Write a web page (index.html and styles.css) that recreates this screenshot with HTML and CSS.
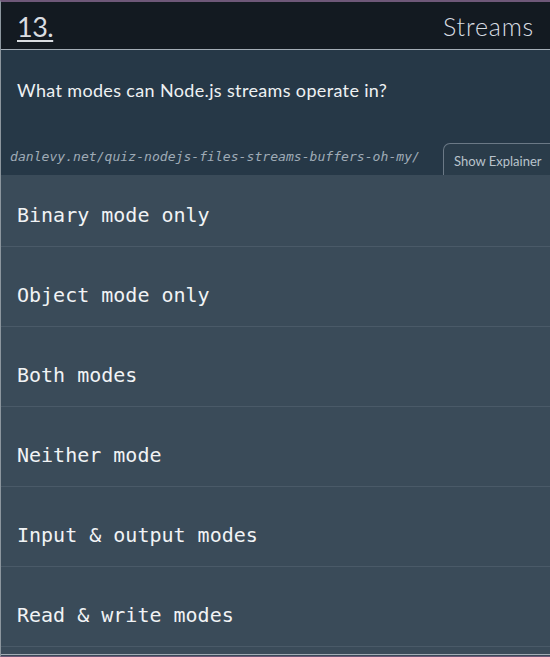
FILE: index.html
```html
<!DOCTYPE html>
<html>
<head>
<meta charset="utf-8">
<link rel="stylesheet" href="styles.css">
</head>
<body>
<div class="quiz">
  <header class="quiz-header">
    <span class="quiz-num">13.</span>
    <span class="quiz-title">Streams</span>
  </header>
  <section class="question">
    <p class="question-text">What modes can Node.js streams operate in?</p>
    <div class="question-meta">
      <span class="source">danlevy.net/quiz-nodejs-files-streams-buffers-oh-my/</span>
      <button class="explainer-btn">Show Explainer</button>
    </div>
  </section>
  <ul class="options">
    <li class="option">Binary mode only</li>
    <li class="option">Object mode only</li>
    <li class="option">Both modes</li>
    <li class="option">Neither mode</li>
    <li class="option">Input &amp; output modes</li>
    <li class="option">Read &amp; write modes</li>
  </ul>
</div>
</body>
</html>
```

FILE: styles.css
```css
* { box-sizing: border-box; }
html, body {
  margin: 0;
  padding: 0;
  background: #3a4b59;
}
.quiz {
  width: 550px;
  height: 657px;
  border-top: 2px solid #6e5878;
  border-bottom: 1px solid #6e5878;
  border-left: 1px solid #8c969e;
  display: flex;
  flex-direction: column;
  overflow: hidden;
  background: #3a4b59;
}
.quiz-header {
  height: 48px;
  flex: none;
  background: #131a21;
  border-bottom: 1px solid #a3adb6;
  display: flex;
  align-items: center;
  justify-content: space-between;
  padding: 0 16px 0 16px;
  font-family: Lato, "Open Sans", sans-serif;
  color: #d9dde1;
}
.quiz-num {
  font-size: 27px;
  text-decoration: underline;
  text-decoration-thickness: 2px;
  text-underline-offset: 3px;
  margin-top: 2px;
  letter-spacing: -0.5px;
}
.quiz-title {
  font-size: 25px;
  font-weight: 300;
  letter-spacing: 0.8px;
}
.question {
  flex: none;
  height: 125px;
  background: #263847;
  display: flex;
  flex-direction: column;
  justify-content: space-between;
}
.question-text {
  margin: 0;
  padding: 29px 16px 0 16px;
  font-family: Lato, "Open Sans", sans-serif;
  font-size: 18px;
  color: #eef1f3;
  letter-spacing: 0.35px;
}
.question-meta {
  display: flex;
  align-items: flex-end;
  justify-content: space-between;
  padding-left: 9px;
}
.source {
  font-family: "DejaVu Sans Mono", monospace;
  font-style: italic;
  font-size: 13.1px;
  color: #9fabb6;
  margin-bottom: 11px;
}
.explainer-btn {
  height: 32px;
  width: 113px;
  margin-right: -6px;
  background: #2a3c4a;
  border: 1px solid #6b7986;
  border-bottom: none;
  border-radius: 7px 7px 0 0;
  font-family: Lato, "Open Sans", sans-serif;
  font-size: 13px;
  color: #b9c3cc;
  text-align: left;
  padding: 2px 0 0 10px;
}
.options {
  list-style: none;
  margin: 0;
  padding: 0;
  flex: none;
  border-bottom: 1px solid #a3adb6;
}
.option {
  height: 72px;
  margin-bottom: 8px;
  border-bottom: 1px solid #4a5a68;
  display: flex;
  align-items: center;
  padding: 8px 16px 0 16px;
  font-family: "DejaVu Sans Mono", monospace;
  font-size: 20px;
  color: #f1f3f5;
}
.option:last-child {
  margin-bottom: 7px;
}
```
